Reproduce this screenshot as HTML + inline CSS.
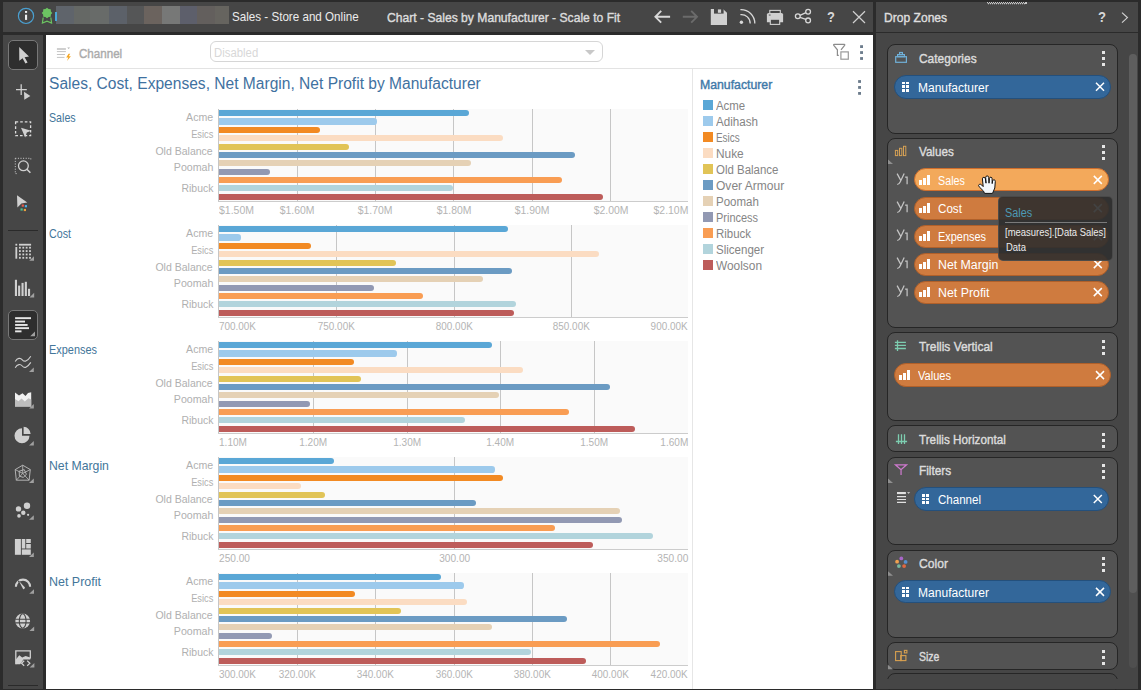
<!DOCTYPE html><html><head><meta charset="utf-8"><style>
*{margin:0;padding:0;box-sizing:border-box}
html,body{width:1141px;height:690px;overflow:hidden;background:#2b2b2b;font-family:"Liberation Sans",sans-serif}
.a{position:absolute}
.t{position:absolute;white-space:nowrap;line-height:1}
svg{position:absolute;left:0;top:0}
</style></head><body>
<div class="a" style="left:3px;top:2px;width:870px;height:30px;background:#464646"></div>
<div class="a" style="left:876px;top:2px;width:262px;height:30px;background:#464646"></div>
<div class="a" style="left:876px;top:33px;width:262px;height:655.7px;background:#464646"></div>
<div class="a" style="left:3px;top:35px;width:40px;height:653.7px;background:#464646"></div>
<div class="a" style="left:46px;top:35px;width:827px;height:653.7px;background:#ffffff"></div>
<div class="a" style="left:56px;top:6px;width:18.0px;height:18px;background:#5f646b"></div>
<div class="a" style="left:73.7px;top:6px;width:16.9px;height:18px;background:#656865"></div>
<div class="a" style="left:90.3px;top:6px;width:19.0px;height:18px;background:#686b69"></div>
<div class="a" style="left:109px;top:6px;width:18.3px;height:18px;background:#5c6169"></div>
<div class="a" style="left:127px;top:6px;width:17.3px;height:18px;background:#555657"></div>
<div class="a" style="left:144px;top:6px;width:18.3px;height:18px;background:#6b635e"></div>
<div class="a" style="left:162px;top:6px;width:18.3px;height:18px;background:#777877"></div>
<div class="a" style="left:180px;top:6px;width:17.3px;height:18px;background:#5d5f6b"></div>
<div class="a" style="left:197px;top:6px;width:18.3px;height:18px;background:#635f5d"></div>
<div class="a" style="left:215px;top:6px;width:14.3px;height:18px;background:#66645f"></div>
<div class="a" style="left:55px;top:12px;width:1.5px;height:9px;background:#4aa8d8"></div>
<div class="t" style="left:232.00px;transform-origin:0 0;top:9.63px;font-size:13.2px;color:#ececec;font-weight:normal;transform:scaleX(0.8817);">Sales - Store and Online</div>
<div class="t" style="left:387.20px;transform-origin:0 0;top:12.06px;font-size:12.8px;color:#dcdcdc;font-weight:normal;transform:scaleX(0.9474);-webkit-text-stroke:0.4px #dcdcdc;">Chart - Sales by Manufacturer - Scale to Fit</div>
<div class="t" style="left:884.00px;transform-origin:0 0;top:10.80px;font-size:13px;color:#dedede;font-weight:normal;transform:scaleX(0.9290);-webkit-text-stroke:0.4px #dedede;">Drop Zones</div>
<div class="t" style="left:49.20px;transform-origin:0 0;top:111.85px;font-size:12.7px;color:#43769a;font-weight:normal;transform:scaleX(0.8404);">Sales</div>
<div class="t" style="left:186.10px;transform-origin:27.10px 0;top:111.93px;font-size:10.6px;color:#b0b0b0;font-weight:normal;">Acme</div>
<div class="t" style="left:187.87px;transform-origin:25.33px 0;top:128.83px;font-size:10.6px;color:#b0b0b0;font-weight:normal;transform:scaleX(0.8766);">Esics</div>
<div class="t" style="left:155.45px;transform-origin:57.75px 0;top:145.83px;font-size:10.6px;color:#b0b0b0;font-weight:normal;transform:scaleX(0.9923);">Old Balance</div>
<div class="t" style="left:173.72px;transform-origin:39.48px 0;top:161.73px;font-size:10.6px;color:#b0b0b0;font-weight:normal;transform:scaleX(1.0055);">Poomah</div>
<div class="t" style="left:180.80px;transform-origin:32.40px 0;top:182.53px;font-size:10.6px;color:#b0b0b0;font-weight:normal;transform:scaleX(0.9846);">Ribuck</div>
<div class="a" style="left:219px;top:108.8px;width:469px;height:92px;background:#fafafa"></div>
<div class="a" style="left:296.8px;top:108.8px;width:1px;height:92.5px;background:#c6c6c6"></div>
<div class="a" style="left:374.9px;top:108.8px;width:1px;height:92.5px;background:#c6c6c6"></div>
<div class="a" style="left:453.4px;top:108.8px;width:1px;height:92.5px;background:#c6c6c6"></div>
<div class="a" style="left:531.9px;top:108.8px;width:1px;height:92.5px;background:#c6c6c6"></div>
<div class="a" style="left:610.3px;top:108.8px;width:1px;height:92.5px;background:#c6c6c6"></div>
<div class="a" style="left:218.3px;top:108.8px;width:1px;height:92.5px;background:#c6c6c6"></div>
<div class="a" style="left:218.3px;top:200.8px;width:470px;height:1.2px;background:#cccccc"></div>
<div class="a" style="left:219px;top:110.2px;width:249.6px;height:6.2px;background:#5aa7d6;border-radius:0 3.1px 3.1px 0"></div>
<div class="a" style="left:219px;top:118.4px;width:158.0px;height:6.2px;background:#9dcaec;border-radius:0 3.1px 3.1px 0"></div>
<div class="a" style="left:219px;top:126.6px;width:101.0px;height:6.2px;background:#f28a23;border-radius:0 3.1px 3.1px 0"></div>
<div class="a" style="left:219px;top:134.7px;width:284.0px;height:6.2px;background:#fbdcc2;border-radius:0 3.1px 3.1px 0"></div>
<div class="a" style="left:219px;top:143.5px;width:129.5px;height:6.2px;background:#e1c457;border-radius:0 3.1px 3.1px 0"></div>
<div class="a" style="left:219px;top:151.7px;width:356.3px;height:6.2px;background:#6b9bc3;border-radius:0 3.1px 3.1px 0"></div>
<div class="a" style="left:219px;top:160.0px;width:251.8px;height:6.2px;background:#e5d1b5;border-radius:0 3.1px 3.1px 0"></div>
<div class="a" style="left:219px;top:168.7px;width:50.6px;height:6.2px;background:#9299b3;border-radius:0 3.1px 3.1px 0"></div>
<div class="a" style="left:219px;top:176.8px;width:342.7px;height:6.2px;background:#f99d53;border-radius:0 3.1px 3.1px 0"></div>
<div class="a" style="left:219px;top:185.0px;width:233.8px;height:6.2px;background:#b2d4dc;border-radius:0 3.1px 3.1px 0"></div>
<div class="a" style="left:219px;top:193.8px;width:384.0px;height:6.2px;background:#bd5c5a;border-radius:0 3.1px 3.1px 0"></div>
<div class="t" style="left:219.30px;transform-origin:0 0;top:205.37px;font-size:10.9px;color:#b4b4b4;font-weight:normal;transform:scaleX(0.9627);">$1.50M</div>
<div class="t" style="left:279.12px;transform-origin:18.18px 0;top:205.37px;font-size:10.9px;color:#b4b4b4;font-weight:normal;transform:scaleX(0.9572);">$1.60M</div>
<div class="t" style="left:357.22px;transform-origin:18.18px 0;top:205.37px;font-size:10.9px;color:#b4b4b4;font-weight:normal;transform:scaleX(0.9572);">$1.70M</div>
<div class="t" style="left:435.72px;transform-origin:18.18px 0;top:205.37px;font-size:10.9px;color:#b4b4b4;font-weight:normal;transform:scaleX(0.9572);">$1.80M</div>
<div class="t" style="left:514.22px;transform-origin:18.18px 0;top:205.37px;font-size:10.9px;color:#b4b4b4;font-weight:normal;transform:scaleX(0.9572);">$1.90M</div>
<div class="t" style="left:592.62px;transform-origin:18.18px 0;top:205.37px;font-size:10.9px;color:#b4b4b4;font-weight:normal;transform:scaleX(0.9572);">$2.00M</div>
<div class="t" style="left:651.64px;transform-origin:36.36px 0;top:205.37px;font-size:10.9px;color:#b4b4b4;font-weight:normal;transform:scaleX(0.9572);">$2.10M</div>
<div class="t" style="left:49.20px;transform-origin:0 0;top:227.85px;font-size:12.7px;color:#43769a;font-weight:normal;transform:scaleX(0.8425);">Cost</div>
<div class="t" style="left:186.10px;transform-origin:27.10px 0;top:227.93px;font-size:10.6px;color:#b0b0b0;font-weight:normal;">Acme</div>
<div class="t" style="left:187.87px;transform-origin:25.33px 0;top:244.83px;font-size:10.6px;color:#b0b0b0;font-weight:normal;transform:scaleX(0.8766);">Esics</div>
<div class="t" style="left:155.45px;transform-origin:57.75px 0;top:261.83px;font-size:10.6px;color:#b0b0b0;font-weight:normal;transform:scaleX(0.9923);">Old Balance</div>
<div class="t" style="left:173.72px;transform-origin:39.48px 0;top:277.73px;font-size:10.6px;color:#b0b0b0;font-weight:normal;transform:scaleX(1.0055);">Poomah</div>
<div class="t" style="left:180.80px;transform-origin:32.40px 0;top:298.53px;font-size:10.6px;color:#b0b0b0;font-weight:normal;transform:scaleX(0.9846);">Ribuck</div>
<div class="a" style="left:219px;top:224.8px;width:469px;height:92px;background:#fafafa"></div>
<div class="a" style="left:335.9px;top:224.8px;width:1px;height:92.5px;background:#c6c6c6"></div>
<div class="a" style="left:453.8px;top:224.8px;width:1px;height:92.5px;background:#c6c6c6"></div>
<div class="a" style="left:571.1px;top:224.8px;width:1px;height:92.5px;background:#c6c6c6"></div>
<div class="a" style="left:218.3px;top:224.8px;width:1px;height:92.5px;background:#c6c6c6"></div>
<div class="a" style="left:218.3px;top:316.8px;width:470px;height:1.2px;background:#cccccc"></div>
<div class="a" style="left:219px;top:226.2px;width:289.0px;height:6.2px;background:#5aa7d6;border-radius:0 3.1px 3.1px 0"></div>
<div class="a" style="left:219px;top:234.4px;width:22.3px;height:6.2px;background:#9dcaec;border-radius:0 3.1px 3.1px 0"></div>
<div class="a" style="left:219px;top:242.6px;width:91.8px;height:6.2px;background:#f28a23;border-radius:0 3.1px 3.1px 0"></div>
<div class="a" style="left:219px;top:250.7px;width:380.0px;height:6.2px;background:#fbdcc2;border-radius:0 3.1px 3.1px 0"></div>
<div class="a" style="left:219px;top:259.5px;width:176.8px;height:6.2px;background:#e1c457;border-radius:0 3.1px 3.1px 0"></div>
<div class="a" style="left:219px;top:267.7px;width:293.4px;height:6.2px;background:#6b9bc3;border-radius:0 3.1px 3.1px 0"></div>
<div class="a" style="left:219px;top:276.0px;width:263.9px;height:6.2px;background:#e5d1b5;border-radius:0 3.1px 3.1px 0"></div>
<div class="a" style="left:219px;top:284.7px;width:154.9px;height:6.2px;background:#9299b3;border-radius:0 3.1px 3.1px 0"></div>
<div class="a" style="left:219px;top:292.8px;width:204.0px;height:6.2px;background:#f99d53;border-radius:0 3.1px 3.1px 0"></div>
<div class="a" style="left:219px;top:301.0px;width:297.2px;height:6.2px;background:#b2d4dc;border-radius:0 3.1px 3.1px 0"></div>
<div class="a" style="left:219px;top:309.8px;width:295.0px;height:6.2px;background:#bd5c5a;border-radius:0 3.1px 3.1px 0"></div>
<div class="t" style="left:219.30px;transform-origin:0 0;top:321.37px;font-size:10.9px;color:#b4b4b4;font-weight:normal;transform:scaleX(0.9111);">700.00K</div>
<div class="t" style="left:316.10px;transform-origin:20.30px 0;top:321.37px;font-size:10.9px;color:#b4b4b4;font-weight:normal;transform:scaleX(0.9111);">750.00K</div>
<div class="t" style="left:434.00px;transform-origin:20.30px 0;top:321.37px;font-size:10.9px;color:#b4b4b4;font-weight:normal;transform:scaleX(0.9111);">800.00K</div>
<div class="t" style="left:551.30px;transform-origin:20.30px 0;top:321.37px;font-size:10.9px;color:#b4b4b4;font-weight:normal;transform:scaleX(0.9111);">850.00K</div>
<div class="t" style="left:647.39px;transform-origin:40.61px 0;top:321.37px;font-size:10.9px;color:#b4b4b4;font-weight:normal;transform:scaleX(0.9111);">900.00K</div>
<div class="t" style="left:49.20px;transform-origin:0 0;top:343.85px;font-size:12.7px;color:#43769a;font-weight:normal;transform:scaleX(0.8606);">Expenses</div>
<div class="t" style="left:186.10px;transform-origin:27.10px 0;top:343.93px;font-size:10.6px;color:#b0b0b0;font-weight:normal;">Acme</div>
<div class="t" style="left:187.87px;transform-origin:25.33px 0;top:360.83px;font-size:10.6px;color:#b0b0b0;font-weight:normal;transform:scaleX(0.8766);">Esics</div>
<div class="t" style="left:155.45px;transform-origin:57.75px 0;top:377.83px;font-size:10.6px;color:#b0b0b0;font-weight:normal;transform:scaleX(0.9923);">Old Balance</div>
<div class="t" style="left:173.72px;transform-origin:39.48px 0;top:393.73px;font-size:10.6px;color:#b0b0b0;font-weight:normal;transform:scaleX(1.0055);">Poomah</div>
<div class="t" style="left:180.80px;transform-origin:32.40px 0;top:414.53px;font-size:10.6px;color:#b0b0b0;font-weight:normal;transform:scaleX(0.9846);">Ribuck</div>
<div class="a" style="left:219px;top:340.8px;width:469px;height:92px;background:#fafafa"></div>
<div class="a" style="left:312.9px;top:340.8px;width:1px;height:92.5px;background:#c6c6c6"></div>
<div class="a" style="left:407.1px;top:340.8px;width:1px;height:92.5px;background:#c6c6c6"></div>
<div class="a" style="left:499.9px;top:340.8px;width:1px;height:92.5px;background:#c6c6c6"></div>
<div class="a" style="left:594.1px;top:340.8px;width:1px;height:92.5px;background:#c6c6c6"></div>
<div class="a" style="left:218.3px;top:340.8px;width:1px;height:92.5px;background:#c6c6c6"></div>
<div class="a" style="left:218.3px;top:432.8px;width:470px;height:1.2px;background:#cccccc"></div>
<div class="a" style="left:219px;top:342.2px;width:272.6px;height:6.2px;background:#5aa7d6;border-radius:0 3.1px 3.1px 0"></div>
<div class="a" style="left:219px;top:350.4px;width:177.7px;height:6.2px;background:#9dcaec;border-radius:0 3.1px 3.1px 0"></div>
<div class="a" style="left:219px;top:358.6px;width:134.5px;height:6.2px;background:#f28a23;border-radius:0 3.1px 3.1px 0"></div>
<div class="a" style="left:219px;top:366.7px;width:304.0px;height:6.2px;background:#fbdcc2;border-radius:0 3.1px 3.1px 0"></div>
<div class="a" style="left:219px;top:375.5px;width:141.5px;height:6.2px;background:#e1c457;border-radius:0 3.1px 3.1px 0"></div>
<div class="a" style="left:219px;top:383.7px;width:390.5px;height:6.2px;background:#6b9bc3;border-radius:0 3.1px 3.1px 0"></div>
<div class="a" style="left:219px;top:392.0px;width:279.6px;height:6.2px;background:#e5d1b5;border-radius:0 3.1px 3.1px 0"></div>
<div class="a" style="left:219px;top:400.7px;width:91.4px;height:6.2px;background:#9299b3;border-radius:0 3.1px 3.1px 0"></div>
<div class="a" style="left:219px;top:408.8px;width:349.8px;height:6.2px;background:#f99d53;border-radius:0 3.1px 3.1px 0"></div>
<div class="a" style="left:219px;top:417.0px;width:246.3px;height:6.2px;background:#b2d4dc;border-radius:0 3.1px 3.1px 0"></div>
<div class="a" style="left:219px;top:425.8px;width:415.7px;height:6.2px;background:#bd5c5a;border-radius:0 3.1px 3.1px 0"></div>
<div class="t" style="left:219.30px;transform-origin:0 0;top:437.37px;font-size:10.9px;color:#b4b4b4;font-weight:normal;transform:scaleX(0.9243);">1.10M</div>
<div class="t" style="left:298.25px;transform-origin:15.15px 0;top:437.37px;font-size:10.9px;color:#b4b4b4;font-weight:normal;transform:scaleX(0.9243);">1.20M</div>
<div class="t" style="left:392.45px;transform-origin:15.15px 0;top:437.37px;font-size:10.9px;color:#b4b4b4;font-weight:normal;transform:scaleX(0.9243);">1.30M</div>
<div class="t" style="left:485.25px;transform-origin:15.15px 0;top:437.37px;font-size:10.9px;color:#b4b4b4;font-weight:normal;transform:scaleX(0.9243);">1.40M</div>
<div class="t" style="left:579.45px;transform-origin:15.15px 0;top:437.37px;font-size:10.9px;color:#b4b4b4;font-weight:normal;transform:scaleX(0.9243);">1.50M</div>
<div class="t" style="left:657.71px;transform-origin:30.29px 0;top:437.37px;font-size:10.9px;color:#b4b4b4;font-weight:normal;transform:scaleX(0.9243);">1.60M</div>
<div class="t" style="left:49.20px;transform-origin:0 0;top:459.85px;font-size:12.7px;color:#43769a;font-weight:normal;transform:scaleX(0.9660);">Net Margin</div>
<div class="t" style="left:186.10px;transform-origin:27.10px 0;top:459.93px;font-size:10.6px;color:#b0b0b0;font-weight:normal;">Acme</div>
<div class="t" style="left:187.87px;transform-origin:25.33px 0;top:476.83px;font-size:10.6px;color:#b0b0b0;font-weight:normal;transform:scaleX(0.8766);">Esics</div>
<div class="t" style="left:155.45px;transform-origin:57.75px 0;top:493.83px;font-size:10.6px;color:#b0b0b0;font-weight:normal;transform:scaleX(0.9923);">Old Balance</div>
<div class="t" style="left:173.72px;transform-origin:39.48px 0;top:509.73px;font-size:10.6px;color:#b0b0b0;font-weight:normal;transform:scaleX(1.0055);">Poomah</div>
<div class="t" style="left:180.80px;transform-origin:32.40px 0;top:530.53px;font-size:10.6px;color:#b0b0b0;font-weight:normal;transform:scaleX(0.9846);">Ribuck</div>
<div class="a" style="left:219px;top:456.8px;width:469px;height:92px;background:#fafafa"></div>
<div class="a" style="left:453.8px;top:456.8px;width:1px;height:92.5px;background:#c6c6c6"></div>
<div class="a" style="left:218.3px;top:456.8px;width:1px;height:92.5px;background:#c6c6c6"></div>
<div class="a" style="left:218.3px;top:548.8px;width:470px;height:1.2px;background:#cccccc"></div>
<div class="a" style="left:219px;top:458.2px;width:114.8px;height:6.2px;background:#5aa7d6;border-radius:0 3.1px 3.1px 0"></div>
<div class="a" style="left:219px;top:466.4px;width:275.9px;height:6.2px;background:#9dcaec;border-radius:0 3.1px 3.1px 0"></div>
<div class="a" style="left:219px;top:474.6px;width:284.2px;height:6.2px;background:#f28a23;border-radius:0 3.1px 3.1px 0"></div>
<div class="a" style="left:219px;top:482.7px;width:82.0px;height:6.2px;background:#fbdcc2;border-radius:0 3.1px 3.1px 0"></div>
<div class="a" style="left:219px;top:491.5px;width:106.0px;height:6.2px;background:#e1c457;border-radius:0 3.1px 3.1px 0"></div>
<div class="a" style="left:219px;top:499.7px;width:256.9px;height:6.2px;background:#6b9bc3;border-radius:0 3.1px 3.1px 0"></div>
<div class="a" style="left:219px;top:508.0px;width:401.0px;height:6.2px;background:#e5d1b5;border-radius:0 3.1px 3.1px 0"></div>
<div class="a" style="left:219px;top:516.7px;width:403.0px;height:6.2px;background:#9299b3;border-radius:0 3.1px 3.1px 0"></div>
<div class="a" style="left:219px;top:524.8px;width:335.7px;height:6.2px;background:#f99d53;border-radius:0 3.1px 3.1px 0"></div>
<div class="a" style="left:219px;top:533.0px;width:433.7px;height:6.2px;background:#b2d4dc;border-radius:0 3.1px 3.1px 0"></div>
<div class="a" style="left:219px;top:541.8px;width:373.6px;height:6.2px;background:#bd5c5a;border-radius:0 3.1px 3.1px 0"></div>
<div class="t" style="left:219.30px;transform-origin:0 0;top:553.37px;font-size:10.9px;color:#b4b4b4;font-weight:normal;transform:scaleX(0.9298);">250.00</div>
<div class="t" style="left:437.63px;transform-origin:16.67px 0;top:553.37px;font-size:10.9px;color:#b4b4b4;font-weight:normal;transform:scaleX(0.9298);">300.00</div>
<div class="t" style="left:654.66px;transform-origin:33.34px 0;top:553.37px;font-size:10.9px;color:#b4b4b4;font-weight:normal;transform:scaleX(0.9298);">350.00</div>
<div class="t" style="left:49.20px;transform-origin:0 0;top:575.85px;font-size:12.7px;color:#43769a;font-weight:normal;transform:scaleX(0.9824);">Net Profit</div>
<div class="t" style="left:186.10px;transform-origin:27.10px 0;top:575.93px;font-size:10.6px;color:#b0b0b0;font-weight:normal;">Acme</div>
<div class="t" style="left:187.87px;transform-origin:25.33px 0;top:592.83px;font-size:10.6px;color:#b0b0b0;font-weight:normal;transform:scaleX(0.8766);">Esics</div>
<div class="t" style="left:155.45px;transform-origin:57.75px 0;top:609.83px;font-size:10.6px;color:#b0b0b0;font-weight:normal;transform:scaleX(0.9923);">Old Balance</div>
<div class="t" style="left:173.72px;transform-origin:39.48px 0;top:625.73px;font-size:10.6px;color:#b0b0b0;font-weight:normal;transform:scaleX(1.0055);">Poomah</div>
<div class="t" style="left:180.80px;transform-origin:32.40px 0;top:646.53px;font-size:10.6px;color:#b0b0b0;font-weight:normal;transform:scaleX(0.9846);">Ribuck</div>
<div class="a" style="left:219px;top:572.8px;width:469px;height:92px;background:#fafafa"></div>
<div class="a" style="left:296.8px;top:572.8px;width:1px;height:92.5px;background:#c6c6c6"></div>
<div class="a" style="left:374.9px;top:572.8px;width:1px;height:92.5px;background:#c6c6c6"></div>
<div class="a" style="left:453.8px;top:572.8px;width:1px;height:92.5px;background:#c6c6c6"></div>
<div class="a" style="left:532.1px;top:572.8px;width:1px;height:92.5px;background:#c6c6c6"></div>
<div class="a" style="left:610.1px;top:572.8px;width:1px;height:92.5px;background:#c6c6c6"></div>
<div class="a" style="left:218.3px;top:572.8px;width:1px;height:92.5px;background:#c6c6c6"></div>
<div class="a" style="left:218.3px;top:664.8px;width:470px;height:1.2px;background:#cccccc"></div>
<div class="a" style="left:219px;top:574.2px;width:221.7px;height:6.2px;background:#5aa7d6;border-radius:0 3.1px 3.1px 0"></div>
<div class="a" style="left:219px;top:582.4px;width:245.2px;height:6.2px;background:#9dcaec;border-radius:0 3.1px 3.1px 0"></div>
<div class="a" style="left:219px;top:590.6px;width:135.6px;height:6.2px;background:#f28a23;border-radius:0 3.1px 3.1px 0"></div>
<div class="a" style="left:219px;top:598.7px;width:248.1px;height:6.2px;background:#fbdcc2;border-radius:0 3.1px 3.1px 0"></div>
<div class="a" style="left:219px;top:607.5px;width:182.0px;height:6.2px;background:#e1c457;border-radius:0 3.1px 3.1px 0"></div>
<div class="a" style="left:219px;top:615.7px;width:348.2px;height:6.2px;background:#6b9bc3;border-radius:0 3.1px 3.1px 0"></div>
<div class="a" style="left:219px;top:624.0px;width:272.6px;height:6.2px;background:#e5d1b5;border-radius:0 3.1px 3.1px 0"></div>
<div class="a" style="left:219px;top:632.7px;width:52.8px;height:6.2px;background:#9299b3;border-radius:0 3.1px 3.1px 0"></div>
<div class="a" style="left:219px;top:640.8px;width:440.9px;height:6.2px;background:#f99d53;border-radius:0 3.1px 3.1px 0"></div>
<div class="a" style="left:219px;top:649.0px;width:312.0px;height:6.2px;background:#b2d4dc;border-radius:0 3.1px 3.1px 0"></div>
<div class="a" style="left:219px;top:657.8px;width:366.8px;height:6.2px;background:#bd5c5a;border-radius:0 3.1px 3.1px 0"></div>
<div class="t" style="left:219.30px;transform-origin:0 0;top:669.37px;font-size:10.9px;color:#b4b4b4;font-weight:normal;transform:scaleX(0.9111);">300.00K</div>
<div class="t" style="left:277.00px;transform-origin:20.30px 0;top:669.37px;font-size:10.9px;color:#b4b4b4;font-weight:normal;transform:scaleX(0.9111);">320.00K</div>
<div class="t" style="left:355.10px;transform-origin:20.30px 0;top:669.37px;font-size:10.9px;color:#b4b4b4;font-weight:normal;transform:scaleX(0.9111);">340.00K</div>
<div class="t" style="left:434.00px;transform-origin:20.30px 0;top:669.37px;font-size:10.9px;color:#b4b4b4;font-weight:normal;transform:scaleX(0.9111);">360.00K</div>
<div class="t" style="left:512.30px;transform-origin:20.30px 0;top:669.37px;font-size:10.9px;color:#b4b4b4;font-weight:normal;transform:scaleX(0.9111);">380.00K</div>
<div class="t" style="left:590.30px;transform-origin:20.30px 0;top:669.37px;font-size:10.9px;color:#b4b4b4;font-weight:normal;transform:scaleX(0.9111);">400.00K</div>
<div class="t" style="left:647.39px;transform-origin:40.61px 0;top:669.37px;font-size:10.9px;color:#b4b4b4;font-weight:normal;transform:scaleX(0.9111);">420.00K</div>
<div class="t" style="left:49.00px;transform-origin:0 0;top:76.26px;font-size:16px;color:#3f71a0;font-weight:normal;transform:scaleX(0.9731);">Sales, Cost, Expenses, Net Margin, Net Profit by Manufacturer</div>
<div class="a" style="left:46px;top:68px;width:827px;height:1px;background:#e3e3e3"></div>
<div class="a" style="left:692px;top:69px;width:1px;height:620px;background:#e6e6e6"></div>
<div class="t" style="left:79.00px;transform-origin:0 0;top:47.93px;font-size:12.6px;color:#ababab;font-weight:normal;transform:scaleX(0.9204);-webkit-text-stroke:0.4px #ababab;">Channel</div>
<div class="a" style="left:209.5px;top:41.2px;width:393px;height:20.4px;border:1px solid #d6d6d6;border-radius:6px;background:#fff"></div>
<div class="t" style="left:213.50px;transform-origin:0 0;top:46.74px;font-size:12px;color:#d8d8d8;font-weight:normal;transform:scaleX(0.9466);">Disabled</div>
<div class="a" style="left:585px;top:49.5px;width:0;height:0;border-left:5.5px solid transparent;border-right:5.5px solid transparent;border-top:5px solid #c8c8c8"></div>
<div class="t" style="left:700.30px;transform-origin:0 0;top:79.29px;font-size:12.3px;color:#3f79a8;font-weight:normal;transform:scaleX(0.9977);-webkit-text-stroke:0.4px #3f79a8;">Manufacturer</div>
<div class="a" style="left:703px;top:100px;width:10px;height:10px;background:#5aa7d6"></div>
<div class="t" style="left:716.40px;transform-origin:0 0;top:100.34px;font-size:12px;color:#858585;font-weight:normal;transform:scaleX(0.9519);">Acme</div>
<div class="a" style="left:703px;top:116px;width:10px;height:10px;background:#9dcaec"></div>
<div class="t" style="left:716.40px;transform-origin:0 0;top:116.34px;font-size:12px;color:#858585;font-weight:normal;transform:scaleX(0.9685);">Adihash</div>
<div class="a" style="left:703px;top:132px;width:10px;height:10px;background:#f28a23"></div>
<div class="t" style="left:716.40px;transform-origin:0 0;top:132.34px;font-size:12px;color:#858585;font-weight:normal;transform:scaleX(0.8266);">Esics</div>
<div class="a" style="left:703px;top:148px;width:10px;height:10px;background:#fbdcc2"></div>
<div class="t" style="left:716.40px;transform-origin:0 0;top:148.34px;font-size:12px;color:#858585;font-weight:normal;transform:scaleX(0.9888);">Nuke</div>
<div class="a" style="left:703px;top:164px;width:10px;height:10px;background:#e1c457"></div>
<div class="t" style="left:716.40px;transform-origin:0 0;top:164.34px;font-size:12px;color:#858585;font-weight:normal;transform:scaleX(0.9545);">Old Balance</div>
<div class="a" style="left:703px;top:180px;width:10px;height:10px;background:#6b9bc3"></div>
<div class="t" style="left:716.40px;transform-origin:0 0;top:180.34px;font-size:12px;color:#858585;font-weight:normal;transform:scaleX(1.0027);">Over Armour</div>
<div class="a" style="left:703px;top:196px;width:10px;height:10px;background:#e5d1b5"></div>
<div class="t" style="left:716.40px;transform-origin:0 0;top:196.34px;font-size:12px;color:#858585;font-weight:normal;transform:scaleX(0.9598);">Poomah</div>
<div class="a" style="left:703px;top:212px;width:10px;height:10px;background:#9299b3"></div>
<div class="t" style="left:716.40px;transform-origin:0 0;top:212.34px;font-size:12px;color:#858585;font-weight:normal;transform:scaleX(0.9128);">Princess</div>
<div class="a" style="left:703px;top:228px;width:10px;height:10px;background:#f99d53"></div>
<div class="t" style="left:716.40px;transform-origin:0 0;top:228.34px;font-size:12px;color:#858585;font-weight:normal;transform:scaleX(0.9542);">Ribuck</div>
<div class="a" style="left:703px;top:244px;width:10px;height:10px;background:#b2d4dc"></div>
<div class="t" style="left:716.40px;transform-origin:0 0;top:244.34px;font-size:12px;color:#858585;font-weight:normal;transform:scaleX(0.9615);">Slicenger</div>
<div class="a" style="left:703px;top:260px;width:10px;height:10px;background:#bd5c5a"></div>
<div class="t" style="left:716.40px;transform-origin:0 0;top:260.34px;font-size:12px;color:#858585;font-weight:normal;transform:scaleX(0.9899);">Woolson</div>
<div class="a" style="left:1129.2px;top:54px;width:7.8px;height:613.5px;background:#4f4f4f;border-radius:4px"></div>
<div class="a" style="left:1129.2px;top:54px;width:7.8px;height:539px;background:#5e5e5e;border-radius:4px"></div>
<div class="a" style="left:887.2px;top:44.3px;width:231px;height:89.3px;background:#535353;border:1.4px solid #262626;border-radius:8px"></div>
<div class="a" style="left:887.2px;top:137.6px;width:231px;height:190.6px;background:#535353;border:1.4px solid #262626;border-radius:8px"></div>
<div class="a" style="left:887.2px;top:332.4px;width:231px;height:88.8px;background:#535353;border:1.4px solid #262626;border-radius:8px"></div>
<div class="a" style="left:887.2px;top:425.3px;width:231px;height:27.0px;background:#535353;border:1.4px solid #262626;border-radius:8px"></div>
<div class="a" style="left:887.2px;top:456.7px;width:231px;height:88.5px;background:#535353;border:1.4px solid #262626;border-radius:8px"></div>
<div class="a" style="left:887.2px;top:549.9px;width:231px;height:88.3px;background:#535353;border:1.4px solid #262626;border-radius:8px"></div>
<div class="a" style="left:887.2px;top:642.4px;width:231px;height:27.2px;background:#535353;border:1.4px solid #262626;border-radius:8px"></div>
<div class="a" style="left:887.2px;top:673.4px;width:231px;height:20px;border:1.4px solid #262626;border-radius:8px"></div>
<div class="a" style="left:876px;top:678.6px;width:253px;height:10px;background:#464646"></div>
<div class="t" style="left:918.90px;transform-origin:0 0;top:53.16px;font-size:12.8px;color:#dcdcdc;font-weight:normal;transform:scaleX(0.9305);-webkit-text-stroke:0.4px #dcdcdc;">Categories</div>
<div class="a" style="left:1101.9px;top:51.1px;width:3.2px;height:3.1px;background:#e6e6e6"></div>
<div class="a" style="left:1101.9px;top:57.1px;width:3.2px;height:3.1px;background:#e6e6e6"></div>
<div class="a" style="left:1101.9px;top:63.1px;width:3.2px;height:3.1px;background:#e6e6e6"></div>
<div class="t" style="left:918.90px;transform-origin:0 0;top:146.06px;font-size:12.8px;color:#dcdcdc;font-weight:normal;transform:scaleX(0.9087);-webkit-text-stroke:0.4px #dcdcdc;">Values</div>
<div class="a" style="left:1101.9px;top:144.6px;width:3.2px;height:3.1px;background:#e6e6e6"></div>
<div class="a" style="left:1101.9px;top:150.6px;width:3.2px;height:3.1px;background:#e6e6e6"></div>
<div class="a" style="left:1101.9px;top:156.6px;width:3.2px;height:3.1px;background:#e6e6e6"></div>
<div class="t" style="left:918.90px;transform-origin:0 0;top:341.06px;font-size:12.8px;color:#dcdcdc;font-weight:normal;transform:scaleX(0.9307);-webkit-text-stroke:0.4px #dcdcdc;">Trellis Vertical</div>
<div class="a" style="left:1101.9px;top:339.6px;width:3.2px;height:3.1px;background:#e6e6e6"></div>
<div class="a" style="left:1101.9px;top:345.6px;width:3.2px;height:3.1px;background:#e6e6e6"></div>
<div class="a" style="left:1101.9px;top:351.6px;width:3.2px;height:3.1px;background:#e6e6e6"></div>
<div class="t" style="left:918.90px;transform-origin:0 0;top:433.86px;font-size:12.8px;color:#dcdcdc;font-weight:normal;transform:scaleX(0.9152);-webkit-text-stroke:0.4px #dcdcdc;">Trellis Horizontal</div>
<div class="a" style="left:1101.9px;top:432.8px;width:3.2px;height:3.1px;background:#e6e6e6"></div>
<div class="a" style="left:1101.9px;top:438.8px;width:3.2px;height:3.1px;background:#e6e6e6"></div>
<div class="a" style="left:1101.9px;top:444.8px;width:3.2px;height:3.1px;background:#e6e6e6"></div>
<div class="t" style="left:918.90px;transform-origin:0 0;top:465.06px;font-size:12.8px;color:#dcdcdc;font-weight:normal;transform:scaleX(0.9241);-webkit-text-stroke:0.4px #dcdcdc;">Filters</div>
<div class="a" style="left:1101.9px;top:463.9px;width:3.2px;height:3.1px;background:#e6e6e6"></div>
<div class="a" style="left:1101.9px;top:469.9px;width:3.2px;height:3.1px;background:#e6e6e6"></div>
<div class="a" style="left:1101.9px;top:475.9px;width:3.2px;height:3.1px;background:#e6e6e6"></div>
<div class="t" style="left:918.90px;transform-origin:0 0;top:557.86px;font-size:12.8px;color:#dcdcdc;font-weight:normal;transform:scaleX(0.9481);-webkit-text-stroke:0.4px #dcdcdc;">Color</div>
<div class="a" style="left:1101.9px;top:556.8px;width:3.2px;height:3.1px;background:#e6e6e6"></div>
<div class="a" style="left:1101.9px;top:562.8px;width:3.2px;height:3.1px;background:#e6e6e6"></div>
<div class="a" style="left:1101.9px;top:568.8px;width:3.2px;height:3.1px;background:#e6e6e6"></div>
<div class="t" style="left:918.90px;transform-origin:0 0;top:650.86px;font-size:12.8px;color:#dcdcdc;font-weight:normal;transform:scaleX(0.8193);-webkit-text-stroke:0.4px #dcdcdc;">Size</div>
<div class="a" style="left:1101.9px;top:649.6px;width:3.2px;height:3.1px;background:#e6e6e6"></div>
<div class="a" style="left:1101.9px;top:655.6px;width:3.2px;height:3.1px;background:#e6e6e6"></div>
<div class="a" style="left:1101.9px;top:661.6px;width:3.2px;height:3.1px;background:#e6e6e6"></div>
<div class="a" style="left:894.2px;top:75.0px;width:216.8px;height:23.7px;background:#33679a;border:1.3px solid #24507c;border-radius:12px"></div>
<div class="t" style="left:918.40px;transform-origin:0 0;top:82.29px;font-size:12.3px;color:#ffffff;font-weight:normal;transform:scaleX(0.9756);">Manufacturer</div>
<svg width="1141" height="690" style="pointer-events:none"><path d="M1096.0 82.8L1104.0 90.8M1104.0 82.8L1096.0 90.8" stroke="#ffffff" stroke-width="1.5"/></svg>
<div class="a" style="left:902.0px;top:81.5px;width:3px;height:2.9px;background:#ffffff"></div>
<div class="a" style="left:906.3px;top:81.5px;width:3px;height:2.9px;background:#ffffff"></div>
<div class="a" style="left:902.0px;top:85.3px;width:3px;height:2.9px;background:#ffffff"></div>
<div class="a" style="left:906.3px;top:85.3px;width:3px;height:2.9px;background:#ffffff"></div>
<div class="a" style="left:902.0px;top:89.1px;width:3px;height:2.9px;background:#ffffff"></div>
<div class="a" style="left:906.3px;top:89.1px;width:3px;height:2.9px;background:#ffffff"></div>
<div class="a" style="left:914.4px;top:168.4px;width:194.4px;height:23.1px;background:#f3a95b;border:1.3px solid #cf6e2c;border-radius:12px"></div>
<div class="t" style="left:938.10px;transform-origin:0 0;top:175.19px;font-size:12.3px;color:#ffffff;font-weight:normal;transform:scaleX(0.8743);">Sales</div>
<svg width="1141" height="690" style="pointer-events:none"><path d="M1093.8 175.9L1101.8 183.9M1101.8 175.9L1093.8 183.9" stroke="#ffffff" stroke-width="1.5"/></svg>
<div class="a" style="left:919.0px;top:180.0px;width:3px;height:5px;background:#ffffff"></div>
<div class="a" style="left:923.0px;top:177.5px;width:3px;height:7.5px;background:#ffffff"></div>
<div class="a" style="left:927.0px;top:174.8px;width:3px;height:10.2px;background:#ffffff"></div>
<div class="a" style="left:914.4px;top:196.6px;width:194.4px;height:23.1px;background:#cf7b3f;border:1.3px solid #b0602a;border-radius:12px"></div>
<div class="t" style="left:937.80px;transform-origin:0 0;top:202.99px;font-size:12.3px;color:#ffffff;font-weight:normal;transform:scaleX(0.9450);">Cost</div>
<svg width="1141" height="690" style="pointer-events:none"><path d="M1093.8 204.1L1101.8 212.1M1101.8 204.1L1093.8 212.1" stroke="#ffffff" stroke-width="1.5"/></svg>
<div class="a" style="left:919.0px;top:208.2px;width:3px;height:5px;background:#ffffff"></div>
<div class="a" style="left:923.0px;top:205.7px;width:3px;height:7.5px;background:#ffffff"></div>
<div class="a" style="left:927.0px;top:203.0px;width:3px;height:10.2px;background:#ffffff"></div>
<div class="a" style="left:914.4px;top:224.6px;width:194.4px;height:23.1px;background:#cf7b3f;border:1.3px solid #b0602a;border-radius:12px"></div>
<div class="t" style="left:938.10px;transform-origin:0 0;top:230.89px;font-size:12.3px;color:#ffffff;font-weight:normal;transform:scaleX(0.8886);">Expenses</div>
<svg width="1141" height="690" style="pointer-events:none"><path d="M1093.8 232.1L1101.8 240.1M1101.8 232.1L1093.8 240.1" stroke="#ffffff" stroke-width="1.5"/></svg>
<div class="a" style="left:919.0px;top:236.2px;width:3px;height:5px;background:#ffffff"></div>
<div class="a" style="left:923.0px;top:233.7px;width:3px;height:7.5px;background:#ffffff"></div>
<div class="a" style="left:927.0px;top:231.0px;width:3px;height:10.2px;background:#ffffff"></div>
<div class="a" style="left:914.4px;top:252.6px;width:194.4px;height:23.1px;background:#cf7b3f;border:1.3px solid #b0602a;border-radius:12px"></div>
<div class="t" style="left:938.10px;transform-origin:0 0;top:259.09px;font-size:12.3px;color:#ffffff;font-weight:normal;transform:scaleX(1.0024);">Net Margin</div>
<svg width="1141" height="690" style="pointer-events:none"><path d="M1093.8 260.1L1101.8 268.1M1101.8 260.1L1093.8 268.1" stroke="#ffffff" stroke-width="1.5"/></svg>
<div class="a" style="left:919.0px;top:264.2px;width:3px;height:5px;background:#ffffff"></div>
<div class="a" style="left:923.0px;top:261.8px;width:3px;height:7.5px;background:#ffffff"></div>
<div class="a" style="left:927.0px;top:259.1px;width:3px;height:10.2px;background:#ffffff"></div>
<div class="a" style="left:914.4px;top:280.6px;width:194.4px;height:23.1px;background:#cf7b3f;border:1.3px solid #b0602a;border-radius:12px"></div>
<div class="t" style="left:938.10px;transform-origin:0 0;top:287.19px;font-size:12.3px;color:#ffffff;font-weight:normal;transform:scaleX(1.0046);">Net Profit</div>
<svg width="1141" height="690" style="pointer-events:none"><path d="M1093.8 288.1L1101.8 296.1M1101.8 288.1L1093.8 296.1" stroke="#ffffff" stroke-width="1.5"/></svg>
<div class="a" style="left:919.0px;top:292.2px;width:3px;height:5px;background:#ffffff"></div>
<div class="a" style="left:923.0px;top:289.8px;width:3px;height:7.5px;background:#ffffff"></div>
<div class="a" style="left:927.0px;top:287.1px;width:3px;height:10.2px;background:#ffffff"></div>
<div class="a" style="left:894.2px;top:363.3px;width:216.8px;height:23.6px;background:#cf7b3f;border:1.3px solid #b0602a;border-radius:12px"></div>
<div class="t" style="left:918.00px;transform-origin:0 0;top:370.39px;font-size:12.3px;color:#ffffff;font-weight:normal;transform:scaleX(0.8993);">Values</div>
<svg width="1141" height="690" style="pointer-events:none"><path d="M1096.0 371.1L1104.0 379.1M1104.0 371.1L1096.0 379.1" stroke="#ffffff" stroke-width="1.5"/></svg>
<div class="a" style="left:899.0px;top:375.2px;width:3px;height:5px;background:#ffffff"></div>
<div class="a" style="left:903.0px;top:372.7px;width:3px;height:7.5px;background:#ffffff"></div>
<div class="a" style="left:907.0px;top:370.0px;width:3px;height:10.2px;background:#ffffff"></div>
<div class="a" style="left:914.4px;top:487.4px;width:194.4px;height:23.3px;background:#33679a;border:1.3px solid #24507c;border-radius:12px"></div>
<div class="t" style="left:938.10px;transform-origin:0 0;top:494.19px;font-size:12.3px;color:#ffffff;font-weight:normal;transform:scaleX(0.9385);">Channel</div>
<svg width="1141" height="690" style="pointer-events:none"><path d="M1093.8 495.0L1101.8 503.0M1101.8 495.0L1093.8 503.0" stroke="#ffffff" stroke-width="1.5"/></svg>
<div class="a" style="left:922.0px;top:493.7px;width:3px;height:2.9px;background:#ffffff"></div>
<div class="a" style="left:926.3px;top:493.7px;width:3px;height:2.9px;background:#ffffff"></div>
<div class="a" style="left:922.0px;top:497.5px;width:3px;height:2.9px;background:#ffffff"></div>
<div class="a" style="left:926.3px;top:497.5px;width:3px;height:2.9px;background:#ffffff"></div>
<div class="a" style="left:922.0px;top:501.3px;width:3px;height:2.9px;background:#ffffff"></div>
<div class="a" style="left:926.3px;top:501.3px;width:3px;height:2.9px;background:#ffffff"></div>
<div class="a" style="left:894.2px;top:580.4px;width:216.8px;height:23.0px;background:#33679a;border:1.3px solid #24507c;border-radius:12px"></div>
<div class="t" style="left:918.00px;transform-origin:0 0;top:587.49px;font-size:12.3px;color:#ffffff;font-weight:normal;transform:scaleX(0.9798);">Manufacturer</div>
<svg width="1141" height="690" style="pointer-events:none"><path d="M1096.0 587.9L1104.0 595.9M1104.0 587.9L1096.0 595.9" stroke="#ffffff" stroke-width="1.5"/></svg>
<div class="a" style="left:902.0px;top:586.6px;width:3px;height:2.9px;background:#ffffff"></div>
<div class="a" style="left:906.3px;top:586.6px;width:3px;height:2.9px;background:#ffffff"></div>
<div class="a" style="left:902.0px;top:590.4px;width:3px;height:2.9px;background:#ffffff"></div>
<div class="a" style="left:906.3px;top:590.4px;width:3px;height:2.9px;background:#ffffff"></div>
<div class="a" style="left:902.0px;top:594.2px;width:3px;height:2.9px;background:#ffffff"></div>
<div class="a" style="left:906.3px;top:594.2px;width:3px;height:2.9px;background:#ffffff"></div>
<svg width="1141" height="690"><path d="M897.1 173.6L900.9 180.6M904.2 173.6L900.3 181.8Q899.2 184.3 897.2 184.5M905.1 177.2H907.1V184.3" fill="none" stroke="#c4c4c4" stroke-width="1.25"/><path d="M897.1 201.6L900.9 208.6M904.2 201.6L900.3 209.8Q899.2 212.3 897.2 212.5M905.1 205.2H907.1V212.3" fill="none" stroke="#c4c4c4" stroke-width="1.25"/><path d="M897.1 229.6L900.9 236.6M904.2 229.6L900.3 237.8Q899.2 240.3 897.2 240.5M905.1 233.2H907.1V240.3" fill="none" stroke="#c4c4c4" stroke-width="1.25"/><path d="M897.1 257.6L900.9 264.6M904.2 257.6L900.3 265.8Q899.2 268.3 897.2 268.5M905.1 261.2H907.1V268.3" fill="none" stroke="#c4c4c4" stroke-width="1.25"/><path d="M897.1 285.6L900.9 292.6M904.2 285.6L900.3 293.8Q899.2 296.3 897.2 296.5M905.1 289.2H907.1V296.3" fill="none" stroke="#c4c4c4" stroke-width="1.25"/></svg>
<svg width="1141" height="690"><path d="M888 159.5L893 164.0L888 164.0Z" fill="#8f8f8f"/></svg>
<svg width="1141" height="690"><path d="M888 478.5L893 483.0L888 483.0Z" fill="#8f8f8f"/></svg>
<svg width="1141" height="690"><path d="M888 571.2L893 575.7L888 575.7Z" fill="#8f8f8f"/></svg>
<svg width="1141" height="690"><path d="M888 664.8L893 669.3L888 669.3Z" fill="#8f8f8f"/></svg>
<div class="a" style="left:998.3px;top:196.3px;width:115px;height:65.2px;background:rgba(45,45,45,0.9);border:1px solid rgba(90,90,90,0.6);border-radius:5px"></div>
<div class="t" style="left:1005.00px;transform-origin:0 0;top:207.39px;font-size:12.3px;color:#4d9ab5;font-weight:normal;transform:scaleX(0.8840);">Sales</div>
<div class="a" style="left:1005px;top:222px;width:102px;height:1px;background:#7a7a7a"></div>
<div class="t" style="left:1005.30px;transform-origin:0 0;top:228.18px;font-size:10.3px;color:#ececec;font-weight:normal;transform:scaleX(0.9189);">[measures].[Data Sales]</div>
<div class="t" style="left:1005.50px;transform-origin:0 0;top:243.08px;font-size:10.3px;color:#ececec;font-weight:normal;transform:scaleX(0.9193);">Data</div>
<div class="a" style="left:8px;top:40.2px;width:30px;height:29.5px;background:#2e2e2e;border:1px solid #787878;border-radius:5px"></div>
<div class="a" style="left:8.1px;top:310.2px;width:29.6px;height:29.6px;background:#2e2e2e;border:1px solid #787878;border-radius:5px"></div>
<div class="a" style="left:8.3px;top:230px;width:29.7px;height:1px;background:#2a2a2a"></div>
<div class="a" style="left:8.3px;top:684.5px;width:29.7px;height:1px;background:#2a2a2a"></div>
<div class="t" style="left:827.20px;transform-origin:0 0;top:8.80px;font-size:15px;color:#d8d8d8;font-weight:bold;transform:scaleX(0.8622);">?</div>
<div class="t" style="left:1098.00px;transform-origin:0 0;top:9.10px;font-size:15px;color:#d8d8d8;font-weight:bold;transform:scaleX(0.8731);">?</div>
<svg width="1141" height="690" style="pointer-events:none"><path d="M19.2 47L29 56.4L24.6 57.2L27.6 62.6L25.4 63.6L22.6 58.2L19.3 60.8Z" fill="#d0d0d0"/><path d="M16 89.6H26.8M21.2 84.2V95" stroke="#d0d0d0" stroke-width="1.3"/><path d="M24 91.8L30.4 95.9L24.3 99.7Z" fill="#d0d0d0"/><rect x="15.6" y="121.9" width="15" height="13.8" fill="none" stroke="#dcdcdc" stroke-width="1.3" stroke-dasharray="2.6 2"/><path d="M21 127.8L31.2 130.8L26.8 132.4L25.2 137.6Z" fill="#d0d0d0"/><path d="M15.3 158.3H30.8V160.5M15.3 158.3V173.6H18" fill="none" stroke="#d0d0d0" stroke-width="1" stroke-dasharray="1 1.6"/><circle cx="23.4" cy="165.8" r="4.9" fill="none" stroke="#d0d0d0" stroke-width="1.3"/><path d="M26.9 169.3L30.4 172.8" stroke="#d0d0d0" stroke-width="1.6"/><path d="M17 195.3L27.3 202.4L21.4 203.6L17.4 207.4Z" fill="#d0d0d0"/><rect x="21.7" y="204.5" width="2.2" height="2.2" fill="#e85a4a"/><rect x="24.8" y="205.1" width="2.2" height="2.2" fill="#4ab0e8"/><rect x="20.5" y="208.4" width="2.2" height="2.2" fill="#48c090"/><rect x="23.8" y="208.9" width="2.2" height="2.2" fill="#e8a040"/><rect x="15.4" y="243.8" width="1.8" height="1.8" fill="#d0d0d0"/><rect x="15.4" y="247" width="1.8" height="11.7" fill="#d0d0d0"/><rect x="19" y="243.8" width="12.1" height="1.8" fill="#d0d0d0"/><rect x="19.00" y="246.80" width="1.8" height="1.8" fill="#d0d0d0"/><rect x="22.37" y="246.80" width="1.8" height="1.8" fill="#d0d0d0"/><rect x="25.74" y="246.80" width="1.8" height="1.8" fill="#d0d0d0"/><rect x="29.11" y="246.80" width="1.8" height="1.8" fill="#d0d0d0"/><rect x="19.00" y="250.17" width="1.8" height="1.8" fill="#d0d0d0"/><rect x="22.37" y="250.17" width="1.8" height="1.8" fill="#d0d0d0"/><rect x="25.74" y="250.17" width="1.8" height="1.8" fill="#d0d0d0"/><rect x="29.11" y="250.17" width="1.8" height="1.8" fill="#d0d0d0"/><rect x="19.00" y="253.54" width="1.8" height="1.8" fill="#d0d0d0"/><rect x="22.37" y="253.54" width="1.8" height="1.8" fill="#d0d0d0"/><rect x="25.74" y="253.54" width="1.8" height="1.8" fill="#d0d0d0"/><rect x="29.11" y="253.54" width="1.8" height="1.8" fill="#d0d0d0"/><rect x="19.00" y="256.91" width="1.8" height="1.8" fill="#d0d0d0"/><rect x="22.37" y="256.91" width="1.8" height="1.8" fill="#d0d0d0"/><rect x="25.74" y="256.91" width="1.8" height="1.8" fill="#d0d0d0"/><rect x="29.11" y="256.91" width="1.8" height="1.8" fill="#d0d0d0"/><path d="M34.0 256.2L34.0 260.8L29.2 260.8Z" fill="#a0a0a0"/><rect x="14.9" y="279.8" width="2.1" height="16.2" fill="#d0d0d0"/><rect x="18.1" y="285.6" width="2.1" height="10.4" fill="#d0d0d0"/><rect x="21.5" y="282.9" width="2.1" height="13.1" fill="#d0d0d0"/><rect x="24.8" y="281.8" width="2.1" height="14.2" fill="#d0d0d0"/><rect x="28" y="288.8" width="2.1" height="7.2" fill="#d0d0d0"/><path d="M34.2 292.8L34.2 297.4L29.4 297.4Z" fill="#a0a0a0"/><rect x="15.1" y="317.2" width="15.9" height="1.9" fill="#e6e6e6"/><rect x="15.1" y="320.6" width="9.9" height="1.9" fill="#e6e6e6"/><rect x="15.1" y="324" width="12.5" height="1.9" fill="#e6e6e6"/><rect x="15.1" y="327.2" width="13.9" height="1.9" fill="#e6e6e6"/><rect x="15.1" y="330.4" width="6.4" height="1.9" fill="#e6e6e6"/><path d="M35.0 331.6L35.0 336.2L30.2 336.2Z" fill="#a0a0a0"/><path d="M15.2 361.6C17.5 357.5 20.5 357.8 22.3 359.8C24.3 362 27 362 30.8 356.2M15.2 367.8C17.5 363.7 20.5 364 22.3 366C24.3 368.2 27 368.2 30.8 362.4" fill="none" stroke="#d0d0d0" stroke-width="1.1"/><path d="M33.8 367.5L33.8 372.1L29.0 372.1Z" fill="#a0a0a0"/><path d="M15 392.5L19 395.5L22.5 393.2L25.5 396L28 393L31.2 392.2V406.4H15Z" fill="#f0f0f0"/><path d="M15 399L18.5 401.2L21.6 398.6L24.8 401.5L28.4 398.2L31.2 399.5V406.4H15Z" fill="#bdbdbd"/><path d="M33.8 404.0L33.8 408.6L29.0 408.6Z" fill="#a0a0a0"/><path d="M22 428.2A7.5 7.5 0 1 0 29.5 435.7H22Z" fill="#d0d0d0"/><path d="M23.6 426.8A7.2 7.2 0 0 1 30.6 433.9H23.6Z" fill="#d0d0d0"/><path d="M33.8 441.0L33.8 445.6L29.0 445.6Z" fill="#a0a0a0"/><path d="M22.7 465.2L30.3 469.6L29.1 480.2L16.3 480.2L15.2 469.6Z" fill="none" stroke="#bdbdbd" stroke-width="0.9"/><path d="M24.2 469.6L26.4 474.2L23.4 477.4L19.4 476.2L19.2 471.2Z" fill="none" stroke="#bdbdbd" stroke-width="0.9"/><path d="M22.7 473.4L22.7 465.2" stroke="#bdbdbd" stroke-width="0.8"/><path d="M22.7 473.4L30.3 469.6" stroke="#bdbdbd" stroke-width="0.8"/><path d="M22.7 473.4L29.1 480.2" stroke="#bdbdbd" stroke-width="0.8"/><path d="M22.7 473.4L16.3 480.2" stroke="#bdbdbd" stroke-width="0.8"/><path d="M22.7 473.4L15.2 469.6" stroke="#bdbdbd" stroke-width="0.8"/><path d="M33.8 478.4L33.8 483.0L29.0 483.0Z" fill="#a0a0a0"/><circle cx="27" cy="505.7" r="3.2" fill="#d0d0d0"/><circle cx="18.5" cy="508.9" r="2.7" fill="#d0d0d0"/><circle cx="23.3" cy="512.7" r="2.2" fill="#d0d0d0"/><circle cx="19" cy="515.9" r="1.8" fill="#d0d0d0"/><circle cx="28.1" cy="514.8" r="1.1" fill="#d0d0d0"/><path d="M33.8 515.2L33.8 519.8L29.0 519.8Z" fill="#a0a0a0"/><rect x="14.9" y="539" width="6" height="15.8" fill="#d0d0d0"/><rect x="21.8" y="539" width="3.5" height="9.5" fill="#d0d0d0"/><rect x="26.2" y="539" width="4.6" height="4" fill="#d0d0d0"/><rect x="26.2" y="544" width="4.6" height="4.5" fill="#d0d0d0"/><rect x="21.8" y="549.4" width="9" height="5.4" fill="#d0d0d0"/><path d="M33.8 552.4L33.8 557.0L29.0 557.0Z" fill="#a0a0a0"/><path d="M15.9 586.7A7.1 7.1 0 0 1 30.1 586.7" fill="none" stroke="#d0d0d0" stroke-width="2.1"/><path d="M17.4 580.2L20.2 581.2L25.2 587.4L23.4 589.6L21.6 588.6Z" fill="#464646"/><path d="M18.8 580.8L25 587.6Q24.6 589.4 23.2 589.2Z" fill="#d0d0d0"/><path d="M34.0 589.2L34.0 593.8L29.2 593.8Z" fill="#a0a0a0"/><circle cx="22.7" cy="621" r="7.4" fill="#d0d0d0"/><ellipse cx="22.7" cy="621" rx="3.4" ry="7.2" fill="none" stroke="#464646" stroke-width="1.1"/><path d="M15.3 619.2H30.1M15.3 622.9H30.1" stroke="#464646" stroke-width="1.1"/><path d="M34.2 626.5L34.2 631.1L29.4 631.1Z" fill="#a0a0a0"/><path d="M15.8 664.2V650.9H30.3V658.6" fill="none" stroke="#d0d0d0" stroke-width="1.3"/><path d="M15.8 664.2V659.4L19.3 655.3L22.2 657.6L25.6 656L30.3 657.4V659.6H23.4L20.2 664.2Z" fill="#d0d0d0"/><path d="M24.2 660.8L21.5 663.3L24.2 665.8M27.2 660.8L29.9 663.3L27.2 665.8" fill="none" stroke="#d0d0d0" stroke-width="1.2"/><path d="M34.4 663.0L34.4 667.6L29.6 667.6Z" fill="#a0a0a0"/><circle cx="26" cy="15.9" r="7.6" fill="none" stroke="#4a9fd0" stroke-width="1.2"/><rect x="25" y="11" width="2.1" height="1.9" fill="#eeeeee"/><rect x="25" y="14.7" width="2.1" height="5.2" fill="#eeeeee"/><path d="M47.00 7.70L48.61 9.12L50.75 9.25L50.88 11.39L52.30 13.00L50.88 14.61L50.75 16.75L48.61 16.88L47.00 18.30L45.39 16.88L43.25 16.75L43.12 14.61L41.70 13.00L43.12 11.39L43.25 9.25L45.39 9.12Z" fill="#6cc462"/><path d="M43.2 17.5L42.4 23L47 21.2L51.6 23L50.8 17.5" fill="none" stroke="#6cc462" stroke-width="1.2"/><path d="M670.1 16.8H655.6M661.2 10.9L655.4 16.8L661.2 22.6" fill="none" stroke="#d8d8d8" stroke-width="1.9"/><path d="M682.8 16.8H697.2M691.2 10.9L697 16.8L691.2 22.6" fill="none" stroke="#6b6b6b" stroke-width="1.9"/><path d="M710.8 8.9H723L727 12.8V25.1H710.8Z" fill="#d0d0d0"/><rect x="714" y="8.9" width="9.6" height="4.7" fill="#464646"/><rect x="717.9" y="9.4" width="3.2" height="3.4" fill="#d0d0d0"/><circle cx="741.4" cy="22.2" r="1.7" fill="#d8d8d8"/><path d="M740.4 14.6A8.8 8.8 0 0 1 750.2 23.6M740.4 9.6A13.8 13.8 0 0 1 754.8 23.6" fill="none" stroke="#d8d8d8" stroke-width="1.3"/><rect x="769.8" y="10.4" width="10.5" height="3.6" fill="none" stroke="#d0d0d0" stroke-width="1.1"/><path d="M766.9 14.6Q766.9 12.9 768.6 12.9H781.4Q783.1 12.9 783.1 14.6V22.2H766.9Z" fill="#d0d0d0"/><rect x="770.3" y="19.2" width="9.4" height="5.2" fill="#464646" stroke="#d0d0d0" stroke-width="1.1"/><rect x="768.8" y="14.6" width="1.8" height="0.9" fill="#464646"/><g fill="none" stroke="#d8d8d8" stroke-width="1.3"><circle cx="797.8" cy="16.3" r="2.4"/><circle cx="808.1" cy="11.7" r="2.4"/><circle cx="808.1" cy="20.4" r="2.4"/><path d="M800 15.3L805.9 12.7M800 17.4L805.9 19.3"/></g><path d="M853 11.2L865 23M865 11.2L853 23" stroke="#d0d0d0" stroke-width="1.2"/><path d="M1122 12.6L1127.4 17.6L1122 22.6" fill="none" stroke="#d0d0d0" stroke-width="1.2"/><g fill="#e8e8e8"><rect x="987" y="2.2" width="1" height="1"/><rect x="988" y="3.2" width="1" height="1"/><rect x="989" y="2.2" width="1" height="1"/><rect x="990" y="3.2" width="1" height="1"/><rect x="991" y="2.2" width="1" height="1"/><rect x="992" y="3.2" width="1" height="1"/><rect x="993" y="2.2" width="1" height="1"/><rect x="994" y="3.2" width="1" height="1"/><rect x="995" y="2.2" width="1" height="1"/><rect x="996" y="3.2" width="1" height="1"/><rect x="997" y="2.2" width="1" height="1"/><rect x="998" y="3.2" width="1" height="1"/><rect x="999" y="2.2" width="1" height="1"/><rect x="1000" y="3.2" width="1" height="1"/><rect x="1001" y="2.2" width="1" height="1"/><rect x="1002" y="3.2" width="1" height="1"/><rect x="1003" y="2.2" width="1" height="1"/><rect x="1004" y="3.2" width="1" height="1"/><rect x="1005" y="2.2" width="1" height="1"/><rect x="1006" y="3.2" width="1" height="1"/><rect x="1007" y="2.2" width="1" height="1"/><rect x="1008" y="3.2" width="1" height="1"/><rect x="1009" y="2.2" width="1" height="1"/><rect x="1010" y="3.2" width="1" height="1"/><rect x="1011" y="2.2" width="1" height="1"/><rect x="1012" y="3.2" width="1" height="1"/><rect x="1013" y="2.2" width="1" height="1"/><rect x="1014" y="3.2" width="1" height="1"/><rect x="1015" y="2.2" width="1" height="1"/><rect x="1016" y="3.2" width="1" height="1"/><rect x="1017" y="2.2" width="1" height="1"/><rect x="1018" y="3.2" width="1" height="1"/><rect x="1019" y="2.2" width="1" height="1"/><rect x="1020" y="3.2" width="1" height="1"/><rect x="1021" y="2.2" width="1" height="1"/><rect x="1022" y="3.2" width="1" height="1"/><rect x="1023" y="2.2" width="1" height="1"/><rect x="1024" y="3.2" width="1" height="1"/><rect x="1025" y="2.2" width="2" height="1.6"/></g><rect x="56.9" y="48.2" width="9" height="1.6" fill="#c4c4c4"/><path d="M56.9 51.6H65.9M56.9 54.5H65M56.9 57.4H64.5" stroke="#c4c4c4" stroke-width="1"/><path d="M67.3 47.6H70L68.65 48.9Z" fill="#b0b0b0"/><path d="M68.6 53.8L66.2 57.5H68.3L67 60.9L70.9 56.2H68.8L70.2 53.8Z" fill="#f5a623"/><path d="M834.2 44.4H844.2Q845.2 44.6 844.6 45.4L841 49.8M834.2 44.4Q833.2 44.6 833.8 45.4L837.4 49.8V55.3H838.8" fill="none" stroke="#8c8c8c" stroke-width="1.2"/><rect x="840.9" y="51.9" width="7.4" height="7.3" fill="#ffffff" stroke="#9a9a9a" stroke-width="1.2"/><rect x="860.1" y="45.20" width="2.9" height="2.8" fill="#6c7c8c"/><rect x="858.1" y="80.10" width="2.9" height="2.8" fill="#6c7c8c"/><rect x="860.1" y="51.15" width="2.9" height="2.8" fill="#6c7c8c"/><rect x="858.1" y="86.05" width="2.9" height="2.8" fill="#6c7c8c"/><rect x="860.1" y="57.10" width="2.9" height="2.8" fill="#6c7c8c"/><rect x="858.1" y="92.00" width="2.9" height="2.8" fill="#6c7c8c"/><g fill="none" stroke="#70b0d8" stroke-width="1.2"><rect x="895.7" y="56.7" width="10.7" height="5.6"/><rect x="897.6" y="54.6" width="6.8" height="2.1"/><rect x="899.6" y="52.5" width="2.8" height="2.1"/></g><g fill="none" stroke="#d4a055" stroke-width="1"><rect x="895.4" y="150.4" width="2.3" height="5.2"/><rect x="899.5" y="148.3" width="2.3" height="7.3"/><rect x="903.5" y="146.3" width="2.3" height="9.3"/></g><path d="M897.5 340.2V350.9M894.9 342.4H905.9M894.9 345.4H905.9M894.9 348.5H905.9" stroke="#7dcdb0" stroke-width="1.3"/><path d="M898.5 434.2V444M901.5 434.2V444M904.5 434.2V444M895.9 441.5H907.1" stroke="#7dcdb0" stroke-width="1.3"/><path d="M895.4 464.8H906.6L901 469.8ZM901.05 469.5V475" fill="none" stroke="#d07ad0" stroke-width="1.2"/><rect x="897" y="492" width="8.9" height="2.1" fill="#e0e0e0"/><path d="M897 496.6H906M897 499.5H906M897 502.4H906" stroke="#e0e0e0" stroke-width="1.2"/><path d="M907 492.2H910.2L908.6 493.8Z" fill="#e0e0e0"/><circle cx="901.3" cy="558.4" r="1.9" fill="#a866c8"/><circle cx="897.1" cy="561.7" r="1.9" fill="#f0a050"/><circle cx="905.6" cy="561.9" r="1.9" fill="#5590d0"/><circle cx="898.9" cy="566.1" r="1.9" fill="#78b8a0"/><circle cx="904.1" cy="566.1" r="1.9" fill="#e06840"/><g fill="none" stroke="#d8a050" stroke-width="1.1"><rect x="895.6" y="651.6" width="5.6" height="9"/><rect x="900.7" y="655.6" width="5.2" height="5"/><rect x="904.4" y="650.4" width="2.5" height="2.5"/></g><path d="M984.5 193.4L983.6 191.2L979.2 186.8Q977.8 185.2 979.4 184.3Q980.6 183.9 981.6 184.9L983.2 186.6L982.4 178.8Q982.5 177.2 983.9 177.3Q985.1 177.4 985.4 178.8L986 183.2L985.7 177.2Q985.9 175.9 987.2 175.9Q988.6 176 988.7 177.4L989 183.2L989.4 178.4Q989.7 177.1 990.9 177.2Q992.2 177.4 992.1 178.8L992.2 183.6L992.6 180.8Q993 179.6 994.2 179.8Q995.4 180.1 995.3 181.4L994.8 188L992.5 193.4Z" fill="#f4f8fc" stroke="#111111" stroke-width="1"/></svg>
</body></html>
